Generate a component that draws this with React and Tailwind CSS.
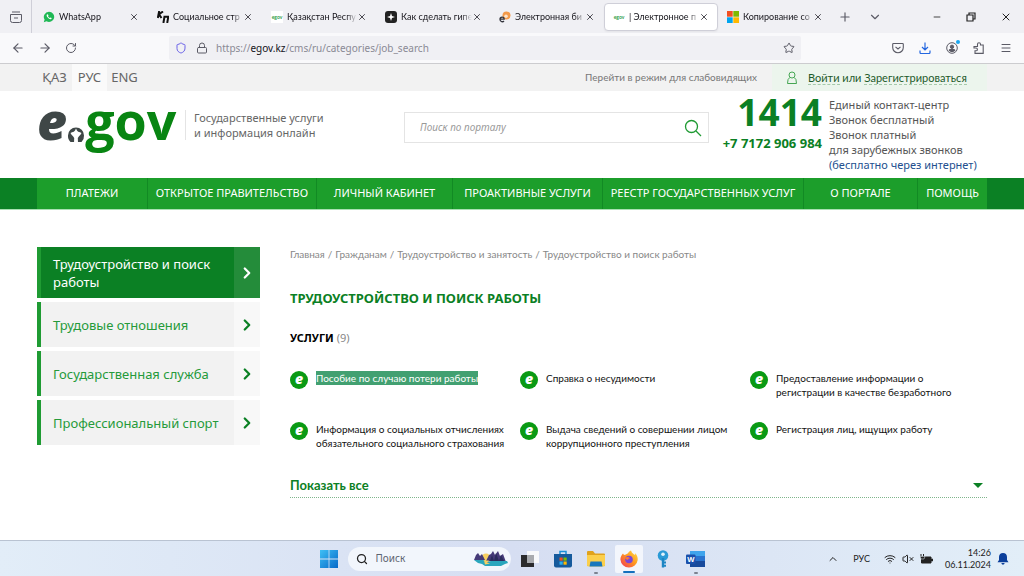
import React, { useState } from 'react';
import { X, Plus, ChevronDown, ChevronUp, ChevronRight, Minus, ArrowLeft, ArrowRight, RotateCw, Lock, Star, Menu, Wifi, VolumeX, Search, Shield } from 'lucide-react';

const tabs = [
  { id: 'wa', title: 'WhatsApp' },
  { id: 'kp', title: 'Социальное стр' },
  { id: 'egov', title: 'Қазақстан Респу' },
  { id: 'how', title: 'Как сделать гипе' },
  { id: 'enbek', title: 'Электронная би' },
  { id: 'egov', title: '| Электронное п', active: true },
  { id: 'ms', title: 'Копирование со' }
];

const navItems = [
  'ПЛАТЕЖИ',
  'ОТКРЫТОЕ ПРАВИТЕЛЬСТВО',
  'ЛИЧНЫЙ КАБИНЕТ',
  'ПРОАКТИВНЫЕ УСЛУГИ',
  'РЕЕСТР ГОСУДАРСТВЕННЫХ УСЛУГ',
  'О ПОРТАЛЕ',
  'ПОМОЩЬ'
];

const sideItems = [
  'Трудоустройство и поиск работы',
  'Трудовые отношения',
  'Государственная служба',
  'Профессиональный спорт'
];

const crumbs = ['Главная', 'Гражданам', 'Трудоустройство и занятость', 'Трудоустройство и поиск работы'];

const services = [
  ['Пособие по случаю потери работы'],
  ['Справка о несудимости'],
  ['Предоставление информации о', 'регистрации в качестве безработного'],
  ['Информация о социальных отчислениях', 'обязательного социального страхования'],
  ['Выдача сведений о совершении лицом', 'коррупционного преступления'],
  ['Регистрация лиц, ищущих работу']
];

const TabIcon = ({ id }) => {
  if (id === 'wa') {
    return (
      <svg viewBox="0 0 12 12" className="size-3 shrink-0">
        <path d="M6 .8a5.1 5.1 0 1 1-2.5 9.5L.8 11.2l.8-2.6A5.1 5.1 0 0 1 6 .8z" fill="#1fb855" />
        <path d="M4.200 3.200c-.9.6-.7 1.800.3 3.100 1.200 1.500 2.700 2.400 3.700 1.800.5-.3.6-.9.4-1.100l-1.100-.6-.7.6C6 6.700 5.300 6 5 5.300l.5-.6-.5-1.300z" fill="#fff" />
      </svg>
    );
  }
  if (id === 'kp') {
    return (
      <svg viewBox="0 0 12 12" className="size-3 shrink-0" fill="none" stroke="#111" strokeWidth="2">
        <path d="M2.200 0 .8 7M6 .5 2 3.300 4.500 7M7.600 5 6.400 12M6.500 5.800h4.800L10.200 12" />
      </svg>
    );
  }
  if (id === 'egov') {
    return (
      <span className="w-3 shrink-0 bg-white text-center text-[5px] leading-3 font-bold text-[#2b9c48]">egov</span>
    );
  }
  if (id === 'how') {
    return (
      <svg viewBox="0 0 12 12" className="size-3 shrink-0">
        <rect width="12" height="12" rx="3" fill="#222" />
        <path d="M6 2 7 5 10 6 7 7 6 10 5 7 2 6 5 5z" fill="#fff" />
      </svg>
    );
  }
  if (id === 'enbek') {
    return (
      <svg viewBox="0 0 12 12" className="size-3 shrink-0">
        <circle cx="7.500" cy="4.500" r="4" fill="#f39a4a" />
        <circle cx="7" cy="5.200" r="1.800" fill="#fbe3cc" />
        <path d="M1 8.200h4.200C5.200 5.200 1 5.500 1 8.200c0 3 3 3 4 1.800" fill="none" stroke="#33343c" strokeWidth="1.300" />
      </svg>
    );
  }
  return (
    <svg viewBox="0 0 12 12" className="size-3 shrink-0">
      <path d="M0 0h5.700v5.700H0z" fill="#f25022" />
      <path d="M6.300 0H12v5.700H6.300z" fill="#7fba00" />
      <path d="M0 6.300h5.700V12H0z" fill="#00a4ef" />
      <path d="M6.300 6.300H12V12H6.300z" fill="#ffb900" />
    </svg>
  );
};

const Tab = ({ tab }) => (
  <div
    className={`flex h-7 w-[114px] shrink items-center rounded-sm pr-2 pl-2 ${
      tab.active ? 'border border-[#cfcfd8] bg-white shadow-xs' : 'border border-transparent'
    }`}
  >
    <TabIcon id={tab.id} />
    <span className="ml-1 flex-1 text-[9px] leading-4 whitespace-nowrap text-[#15141a] [mask-image:linear-gradient(to_right,black_85%,transparent)]">
      {tab.title}
    </span>
    <button aria-label="Закрыть">
      <X className="size-2.5 text-[#2b2a33]" strokeWidth={2} />
    </button>
  </div>
);

const BrowserChrome = () => (
  <header className="font-['Noto_Sans',sans-serif]">
    <div className="flex h-[33px] items-center bg-[#f0f0f4] text-[#5b5b66]">
      <button aria-label="Firefox View" className="flex h-full w-8 items-center justify-center border-r border-[#cfcfd8]">
        <svg viewBox="0 0 12 12" className="size-3" fill="none" stroke="currentColor" strokeWidth="1">
          <path d="M2 1h8M.5 3.500h11v6a2 2 0 0 1-2 2h-7a2 2 0 0 1-2-2zM4 7h4" />
        </svg>
      </button>
      <div className="ml-0.5 flex font-['Lato',sans-serif]">
        {tabs.map((tab, i) => (
          <Tab key={i} tab={tab} />
        ))}
      </div>
      <button aria-label="Новая вкладка" className="ml-1.5"><Plus className="size-3.5" strokeWidth={2} /></button>
      <button aria-label="Список вкладок" className="ml-4"><ChevronDown className="size-3.5" strokeWidth={2} /></button>
      <div className="ml-auto flex items-center gap-6 pr-3 text-[#222]">
        <button aria-label="Свернуть"><Minus className="size-2.5" strokeWidth={2} /></button>
        <button aria-label="Окно">
          <svg viewBox="0 0 10 10" className="size-2.5" fill="none" stroke="currentColor" strokeWidth="1.200">
            <path d="M1 3h6v6H1zM3 3V1h6v6H7" />
          </svg>
        </button>
        <button aria-label="Закрыть окно"><X className="size-3" strokeWidth={2} /></button>
      </div>
    </div>
    <div className="flex h-[31px] items-center border-b border-[#cccccf] bg-[#f9f9fb] text-[#5b5b66]">
      <button aria-label="Назад" className="ml-[11px]"><ArrowLeft className="size-3.5" strokeWidth={2} /></button>
      <button aria-label="Вперёд" className="ml-[13px]"><ArrowRight className="size-3.5" strokeWidth={2} /></button>
      <button aria-label="Обновить" className="ml-[13px]"><RotateCw className="size-3" strokeWidth={2} /></button>
      <div className="ml-[92px] flex h-6 flex-1 items-center rounded-xs bg-[#f0f0f4] pr-1.5 pl-1.5">
        <Shield className="size-3 text-[#6a62e8]" strokeWidth={2} />
        <Lock className="ml-[9px] size-3" strokeWidth={2} />
        <span className="ml-2 text-[10px] leading-4 text-[#8a8a94]">
          https://<span className="text-[#15141a]">egov.kz</span>/cms/ru/categories/job_search
        </span>
        <button aria-label="Добавить в закладки" className="ml-auto"><Star className="size-3" strokeWidth={2} /></button>
      </div>
      <div className="ml-[91px] flex items-center gap-[15px] pr-3">
        <button aria-label="Pocket">
          <svg viewBox="0 0 12 12" className="size-3" fill="none" stroke="currentColor" strokeWidth="1.100">
            <path d="M1.500 1.500h9a.8.8 0 0 1 .8.800V5.500a5.300 5.300 0 0 1-10.600 0V2.300a.8.8 0 0 1 .8-.8z" />
            <path d="M3.500 4.800 6 7l2.500-2.200" />
          </svg>
        </button>
        <button aria-label="Загрузки" className="text-[#2467e0]">
          <svg viewBox="0 0 12 12" className="size-3" fill="none" stroke="currentColor" strokeWidth="1.200">
            <path d="M6 .5v7.500M3 5l3 3 3-3M1 8.500v2q0 1 1 1h8q1 0 1-1v-2" />
          </svg>
        </button>
        <button aria-label="Аккаунт" className="relative">
          <svg viewBox="0 0 12 12" className="size-3" fill="none" stroke="currentColor" strokeWidth="1">
            <circle cx="6" cy="6" r="5.300" />
            <circle cx="6" cy="4.800" r="1.700" fill="currentColor" />
            <path d="M3 8.500q0-1 1-1h4q1 0 1 1-3 2.500-6 0z" fill="currentColor" />
          </svg>
          <span className="absolute -top-0.5 -right-0.5 size-1 rounded-full bg-[#1aa7f0]" />
        </button>
        <button aria-label="Расширения">
          <svg viewBox="0 0 12 12" className="size-3" fill="none" stroke="currentColor" strokeWidth="1.100">
            <path d="M4.500 3V2.200a1.500 1.500 0 0 1 3 0V3h2.700v8.400H2V8.800h1a1.400 1.400 0 0 0 0-2.800H1V4.500h3.500z" />
          </svg>
        </button>
        <button aria-label="Меню"><Menu className="size-3" strokeWidth={2} /></button>
      </div>
    </div>
  </header>
);

const TopBar = () => {
  const langs = ['ҚАЗ', 'РУС', 'ENG'];
  return (
    <div className="flex h-[27px] bg-[#f2f2f2] px-[37px] text-[#666]">
      <div className="flex font-['Noto_Sans',sans-serif]">
        {langs.map(lang => (
          <button
            key={lang}
            className={`w-[35px] text-center text-[13px] ${lang === 'РУС' ? 'bg-[#fafafa]' : ''}`}
          >
            {lang}
          </button>
        ))}
      </div>
      <a href="#low-vision" className="mr-[15px] ml-auto text-[10px] leading-[27px] text-[#777]">
        Перейти в режим для слабовидящих
      </a>
      <div className="flex w-[215px] items-center bg-[#ecf5ed] pl-3.5 text-[11px] text-[#1d5a2a]">
        <svg viewBox="0 0 12 14" className="mr-2.5 h-3.5 w-3" fill="none" stroke="#45a653" strokeWidth="1">
          <circle cx="6" cy="4" r="3" />
          <path d="M3.800 6.500Q1.500 7.500 1.500 12.500h9q0-5-2.300-6" />
        </svg>
        <span className="leading-4 whitespace-nowrap">
          <a href="#login" className="border-b border-dashed border-[#a5c9aa]">Войти</a> или{' '}
          <a href="#register" className="border-b border-dashed border-[#a5c9aa]">Зарегистрироваться</a>
        </span>
      </div>
    </div>
  );
};

const Logo = () => (
  <a href="#home" aria-label="egov" className="flex items-end font-['Open_Sans',sans-serif] text-[52px] leading-[50px] font-bold">
    <span className="font-extrabold text-[#3f4747] italic">e</span>
    <svg viewBox="0 0 18 18" className="mb-0.5 h-[18px] w-[18px]">
      <path d="M3.500 17A8 8 0 0 1 1 10.500 8 8 0 0 1 17 10.500 8 8 0 0 1 14.500 17z" fill="#3f4747" />
      <path d="M9 3.500q.8 2.300 2.200 3.200 1.800.3 3.300 1.300-.8 2-2.500 3.200L10.800 13l.2 5H7l.2-5L6 11.200Q4.300 10 3.500 8q1.500-1 3.300-1.300Q8.200 5.800 9 3.500z" fill="#fff" />
    </svg>
    <span className="text-[#088512]">gov</span>
  </a>
);

const SiteHeader = () => (
  <div className="flex h-[87px] items-start px-[37px] font-['Noto_Sans',sans-serif]">
    <div className="w-[148px] shrink-0 pt-1">
      <Logo />
    </div>
    <p className="mt-[19px] border-l border-[#e4e4e4] pl-2 text-[11px] leading-[15px] text-[#666]">
      Государственные услуги<br />и информация онлайн
    </p>
    <form className="mt-[21px] ml-auto flex h-[31px] w-[305px] items-center border border-[#e4e4e4] pr-1.5 pl-[15px]">
      <input
        type="text"
        aria-label="Поиск по порталу"
        placeholder="Поиск по порталу"
        className="min-w-0 flex-1 text-[10px] italic placeholder:text-[#999] focus:outline-none"
      />
      <button type="button" aria-label="Искать">
        <svg viewBox="0 0 18 18" className="size-[18px]" fill="none" stroke="#1f9a33" strokeWidth="1.300">
          <circle cx="7.500" cy="7.500" r="6" />
          <path d="m12 12 5 5" />
        </svg>
      </button>
    </form>
    <div className="ml-2.5 w-[103px] pt-0.5 text-right font-bold text-[#0b8024]">
      <div className="text-[37px] leading-[38px]">1414</div>
      <div className="mt-1 text-[13px] leading-4 whitespace-nowrap">+7 7172 906 984</div>
    </div>
    <div className="ml-[7px] w-[158px] pt-[6px] text-[11px] leading-[15px] whitespace-nowrap text-[#555]">
      <p>Единый контакт-центр</p>
      <p>Звонок бесплатный</p>
      <p>Звонок платный</p>
      <p>для зарубежных звонков</p>
      <a href="#call" className="block text-[#24508f]">(бесплатно через интернет)</a>
    </div>
  </div>
);

const MainNav = () => (
  <nav className="h-8 border-b border-[#a9e0b2] bg-[#0b8024] px-[37px] font-['Noto_Sans',sans-serif]">
    <div className="grid h-full grid-cols-[111fr_169fr_136fr_150fr_201fr_114fr_69fr] bg-[#1c9e2b]">
      {navItems.map(item => (
        <a
          key={item}
          href="#nav"
          className="flex items-center justify-center border-r border-[#128a24] text-[11px] whitespace-nowrap text-white last:border-r-0"
        >
          {item}
        </a>
      ))}
    </div>
  </nav>
);

const Sidebar = () => (
  <aside className="flex w-[223px] shrink-0 flex-col gap-1 font-['Noto_Sans',sans-serif]">
    {sideItems.map((item, i) => (
      <a
        key={item}
        href="#section"
        className={`flex border-l-4 text-[13px] leading-[18px] ${
          i === 0
            ? 'min-h-[51px] border-[#1f9b33] bg-[#0b8024] text-white'
            : 'min-h-[45px] border-[#1f9b33] bg-[#f2f2f2] text-[#259a3a]'
        }`}
      >
        <span className="flex flex-1 items-center pr-1 pl-3">{item}</span>
        <span className={`flex w-[26px] items-center justify-center ${i === 0 ? 'bg-[#248c3a]' : 'bg-[#f8f8f8]'}`}>
          <ChevronRight className={`size-[18px] ${i === 0 ? 'text-white' : 'text-[#0b8024]'}`} strokeWidth={3} />
        </span>
      </a>
    ))}
  </aside>
);

const ServiceIcon = () => (
  <span className="flex size-[18px] shrink-0 items-center justify-center rounded-full bg-[#0a9a14] pb-0.5 font-['Open_Sans',sans-serif] text-[14px] leading-4 font-extrabold text-white italic">
    e
  </span>
);

const Content = () => {
  const [open, setOpen] = useState(false);
  return (
    <main className="min-w-0 flex-1">
      <div className="flex gap-[3px] text-[10px] leading-[14px] whitespace-nowrap text-[#888]">
        {crumbs.map((crumb, i) => (
          <React.Fragment key={crumb}>
            {i > 0 && <span>/</span>}
            <a href="#crumb">{crumb}</a>
          </React.Fragment>
        ))}
      </div>
      <h1 className="mt-[27px] font-['Noto_Sans',sans-serif] text-[13px] leading-5 font-bold text-[#0b8024]">ТРУДОУСТРОЙСТВО И ПОИСК РАБОТЫ</h1>
      <h2 className="mt-[22px] font-['Noto_Sans',sans-serif] text-[11px] leading-4 font-bold text-black">
        УСЛУГИ <span className="font-normal text-[#888]">(9)</span>
      </h2>
      <ul className="mt-[25px] grid grid-cols-[230fr_230fr_237fr] gap-y-[23px] text-[10px] leading-[14px] text-[#111]">
        {services.map((lines, i) => (
          <li key={lines[0]} className="flex min-h-7 min-w-0 items-start gap-2">
            <ServiceIcon />
            <a href="#service" className="whitespace-nowrap">
              {lines.map(line => (
                <span key={line} className={`block ${i === 0 ? 'bg-[#42a071] text-white' : ''}`}>{line}</span>
              ))}
            </a>
          </li>
        ))}
      </ul>
      <button
        onClick={() => setOpen(!open)}
        className="mt-[26px] flex w-full items-center justify-between border-b border-dotted border-[#7fb58c] pr-1 pb-[3px] text-[13px] leading-[18px] font-bold text-[#0b8024]"
      >
        Показать все
        <svg viewBox="0 0 10 5" className="h-[5px] w-2.5"><path d="M0 0h10L5 5z" fill="#0b8024" /></svg>
      </button>
    </main>
  );
};

const WindowsLogo = () => (
  <svg viewBox="0 0 18 18" className="size-[18px]">
    <defs>
      <linearGradient id="win" x1="0" y1="0" x2="1" y2="1">
        <stop offset="0" stopColor="#3fc0f5" />
        <stop offset="1" stopColor="#0668c8" />
      </linearGradient>
    </defs>
    <path d="M0 0h8.600v8.600H0zM9.400 0H18v8.600H9.400zM0 9.400h8.600V18H0zM9.400 9.400H18V18H9.400z" fill="url(#win)" />
  </svg>
);

const Landscape = () => (
  <svg viewBox="0 0 36 17" className="h-[17px] w-9">
    <circle cx="13" cy="8" r="4.500" fill="#f6cf62" />
    <path d="M1 10 3 5l2-2 2 3 2-2 3 6zM13 11l3-6 2-1 2-3 2 4 3-4 2 5 3-2 3 8z" fill="#453a78" />
    <path d="M17 11l2-6 2 6 2-8 3 8 2-6 3 6z" fill="#2b2c5c" />
    <path d="M1 10h9l4 2 4-1h16l1 2-3 1-4 2H12l-3-2-4-1z" fill="#2aa6bd" />
    <path d="M11 10.500h5l-2 2 3 1-5 1z" fill="#f6cf62" />
  </svg>
);

const TaskApps = () => (
  <div className="flex h-full items-center">
    <button aria-label="Представление задач">
      <svg viewBox="0 0 18 18" className="size-[18px]">
        <path d="M6 1h12v12H6z" fill="#f8f9fb" />
        <path d="M0 5h13v12H0z" fill="#2b2b2d" />
        <path d="M6 5h7v8H6z" fill="#a9abaf" />
      </svg>
    </button>
    <button aria-label="Microsoft Store" className="ml-[15px]">
      <svg viewBox="0 0 18 18" className="size-[18px]">
        <path d="M6 4V1.500h6V4" fill="none" stroke="#1a90d8" strokeWidth="1.500" />
        <path d="M0 4h18v11.500a2 2 0 0 1-2 2H2a2 2 0 0 1-2-2z" fill="#155a9c" />
        <path d="M5.500 7.500h3.200v3.200H5.500z" fill="#f25022" />
        <path d="M9.500 7.500h3.200v3.200H9.500z" fill="#7fba00" />
        <path d="M5.500 11.500h3.200v3.200H5.500z" fill="#2ab0f0" />
        <path d="M9.500 11.500h3.200v3.200H9.500z" fill="#ffb900" />
      </svg>
    </button>
    <button aria-label="Проводник" className="relative ml-[15px]">
      <svg viewBox="0 0 18 18" className="size-[18px]">
        <path d="M0 2q0-1 1-1h5l2 2.500h9q1 0 1 1V16H0z" fill="#e0a21c" />
        <path d="M0 5h18v10q0 1.500-1.500 1.500h-15Q0 16.500 0 15z" fill="#fbcf4c" />
        <path d="M3.500 11.500h11l1 5H2.500z" fill="#1877bd" />
      </svg>
      <span className="absolute -bottom-1.5 left-[7px] h-0.5 w-1 rounded-full bg-[#7d8390]" />
    </button>
    <button aria-label="Firefox" className="relative ml-2.5 flex h-7 w-7 items-center justify-center rounded-xs bg-[#f3f6fc]">
      <svg viewBox="0 0 18 18" className="size-[18px]">
        <defs>
          <linearGradient id="fox" x1="1" y1="0" x2="0" y2="1">
            <stop offset="0" stopColor="#ffe14a" />
            <stop offset=".45" stopColor="#ff9a1f" />
            <stop offset="1" stopColor="#f0305a" />
          </linearGradient>
        </defs>
        <path d="M3 3.500 4 5l2-.5C7 3.500 7.500 3.500 8 3.200 9 1 10.500 1 11 .5q.5 2 2.500 3.500l1.500 1q.5-.8 0-2 3 3 2.700 7A8.700 8.700 0 0 1 .4 9.500C.4 7 1.500 5 3 3.500z" fill="url(#fox)" />
        <circle cx="9" cy="9.500" r="3.800" fill="#7a45d8" />
        <path d="M5 8q3-2 5 .2-2 0-2 1.500-2 .2-3-1.700z" fill="#ff7a2a" />
      </svg>
      <span className="absolute bottom-0 left-2 h-0.5 w-3 rounded-full bg-[#1470bd]" />
    </button>
    <button aria-label="Пароли" className="ml-3.5">
      <svg viewBox="0 0 12 18" className="h-[18px] w-3">
        <circle cx="6" cy="5.500" r="5.300" fill="#2a9ad6" />
        <circle cx="6" cy="4.200" r="1.800" fill="#dff2fb" />
        <path d="M4.800 8h2.400v9.500H4.800zM7 11.500h2v2H7zM7 14.800h2v2H7z" fill="#1d86c4" />
      </svg>
    </button>
    <button aria-label="Word" className="relative ml-[17px]">
      <svg viewBox="0 0 19 18" className="h-[18px] w-[19px]">
        <path d="M4 1h15v5H4z" fill="#3fa4ec" />
        <path d="M4 6h15v5H4z" fill="#2a74cf" />
        <path d="M4 11h15v6H4z" fill="#184a9c" />
        <rect y="4.500" width="9.500" height="9.500" rx="1" fill="#1a50ab" />
        <text x="1.200" y="12" fontSize="7.500" fontWeight="700" fill="#fff">W</text>
      </svg>
      <span className="absolute -bottom-1.5 left-2 h-0.5 w-1 rounded-full bg-[#7d8390]" />
    </button>
  </div>
);

const Taskbar = () => (
  <footer className="mt-auto grid h-9 grid-cols-[1fr_auto_1fr] items-center border-t border-[#b9c3d2] bg-linear-to-r from-[#e2edf8] via-[#d6def2] to-[#e2eef8] font-['Noto_Sans',sans-serif] text-[#222]">
    <span />
    <div className="flex h-full items-center">
      <button aria-label="Пуск"><WindowsLogo /></button>
      <label className="mr-2.5 ml-2.5 flex h-6 w-[163px] items-center rounded-full bg-[#f2f6fc] pr-0.5 pl-2">
        <Search className="size-3 text-[#222]" strokeWidth={2.5} />
        <input
          type="text"
          aria-label="Поиск"
          placeholder="Поиск"
          className="ml-2 min-w-0 flex-1 text-[10px] placeholder:text-[#5d6470] focus:outline-none"
        />
        <Landscape />
      </label>
      <TaskApps />
    </div>
    <div className="flex items-center justify-end pr-[15px] font-['Lato',sans-serif] text-[9px]">
      <button aria-label="Скрытые значки"><ChevronUp className="size-3" strokeWidth={2} /></button>
      <span className="ml-3.5">РУС</span>
      <Wifi className="ml-3.5 size-3" strokeWidth={2} />
      <VolumeX className="ml-1.5 size-3" strokeWidth={2} />
      <svg viewBox="0 0 13 10" className="ml-1.5 h-2.5 w-[13px]">
        <path d="M1.500 3h9.500v6H1.500z" fill="#222" stroke="#222" />
        <path d="M11.500 5h1v2h-1zM1 0v3M3.500 0v3" fill="#222" stroke="#222" />
        <path d="M0 2.500h5L4 5H1z" fill="#222" stroke="#e2eef8" strokeWidth=".5" />
      </svg>
      <div className="ml-3 text-right leading-3">
        14:26<br />06.11.2024
      </div>
      <svg viewBox="0 0 12 12" className="ml-1.5 size-3">
        <path d="M6 0q3.800 0 4 4v3l1.500 2.200H.5L2 7V4q.2-4 4-4zM4.300 10h3.400Q7.300 11.800 6 11.800T4.300 10z" fill="#0c3f9b" />
      </svg>
    </div>
  </footer>
);

export default function App() {
  return (
    <div className="flex min-h-screen flex-col bg-white font-['Lato',sans-serif]">
      <BrowserChrome />
      <TopBar />
      <SiteHeader />
      <MainNav />
      <div className="flex gap-[30px] px-[37px] pt-[37px]">
        <Sidebar />
        <Content />
      </div>
      <Taskbar />
    </div>
  );
}
